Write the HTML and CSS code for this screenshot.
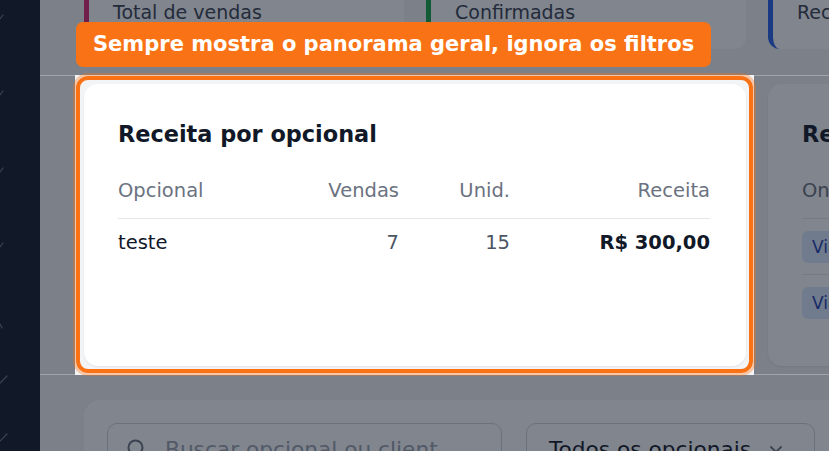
FILE: index.html
```html
<!DOCTYPE html>
<html lang="pt-BR">
<head>
<meta charset="utf-8">
<title>Receita por opcional</title>
<link rel="stylesheet" href="styles.css">
</head>
<body>
<div class="app">
  <aside class="sidebar">
    <svg class="side-marks" width="40" height="451" viewBox="0 0 40 451">
      <path d="M0 19 L3 15" />
      <path d="M0 95 L3 91" />
      <path d="M0 172 L3 168" />
      <path d="M0 247 L3 243" />
      <path d="M0 324 L2 328" />
      <path d="M0 383 L7 376" />
      <path d="M0 441 L7 434" />
    </svg>
  </aside>
  <main class="main">
    <div class="content">
      <section class="stats">
        <div class="stat stat-pink">
          <div class="stat-value">12</div>
          <div class="stat-label">Total de vendas</div>
        </div>
        <div class="stat stat-green">
          <div class="stat-value">7</div>
          <div class="stat-label">Confirmadas</div>
        </div>
        <div class="stat stat-blue">
          <div class="stat-value">R$ 300,00</div>
          <div class="stat-label">Receita total</div>
        </div>
      </section>

      <section class="cards">
        <div class="card card-wide">
          <h2 class="card-title">Receita por opcional</h2>
          <div class="table">
            <div class="th">Opcional</div>
            <div class="th num">Vendas</div>
            <div class="th num">Unid.</div>
            <div class="th num">Receita</div>
            <div class="td name">teste</div>
            <div class="td num muted">7</div>
            <div class="td num muted">15</div>
            <div class="td num strong">R$ 300,00</div>
          </div>
        </div>
        <div class="card">
          <h2 class="card-title">Receita por cliente</h2>
          <div class="list">
            <div class="list-head">Onde comprou</div>
            <div class="list-row"><span class="badge">Viagem</span></div>
            <div class="list-row"><span class="badge">Viagem</span></div>
          </div>
        </div>
      </section>

      <section class="filters">
        <div class="search">
          <svg class="search-icon" width="22" height="22" viewBox="0 0 22 22">
            <circle cx="9.5" cy="9.5" r="7" />
            <path d="M14.5 14.5 L20 20" />
          </svg>
          <span class="placeholder">Buscar opcional ou cliente</span>
        </div>
        <div class="select">
          <span class="select-text">Todos os opcionais</span>
          <svg class="chevron" width="14" height="14" viewBox="0 0 14 14">
            <path d="M2 5 L7 10 L12 5" />
          </svg>
        </div>
      </section>
    </div>
  </main>
</div>

<div class="tour">
  <div class="shade shade-top"></div>
  <div class="seam seam-top-left"></div>
  <div class="seam seam-top-right"></div>
  <div class="shade shade-left"></div>
  <div class="shade shade-right"></div>
  <div class="seam seam-bottom-left"></div>
  <div class="seam seam-bottom-right"></div>
  <div class="shade shade-bottom"></div>
  <div class="ring"></div>
  <div class="tip">Sempre mostra o panorama geral, ignora os filtros</div>
</div>
</body>
</html>
```

FILE: styles.css
```css
* { box-sizing: border-box; }

html, body {
  margin: 0;
  padding: 0;
  width: 829px;
  height: 451px;
  overflow: hidden;
  font-family: "DejaVu Sans", "Noto Sans", sans-serif;
  color: #111827;
}

.app {
  display: flex;
  width: 829px;
  height: 451px;
  overflow: hidden;
}

.sidebar {
  width: 40px;
  flex: 0 0 40px;
  background: #111827;
}

.side-marks path {
  stroke: #6b7280;
  stroke-width: 1.2;
  fill: none;
  stroke-linecap: round;
}

.main {
  flex: 1;
  background: #f3f4f6;
  overflow: hidden;
}

.content {
  width: 1120px;
  padding-left: 44px;
  margin-top: -50px;
  display: flex;
  flex-direction: column;
}

/* stat cards */
.stats {
  display: grid;
  grid-template-columns: 320px 320px 320px;
  column-gap: 22px;
  margin-bottom: 35px;
}

.stat {
  height: 99px;
  background: #ffffff;
  border-radius: 12px;
  border-left: 5px solid #db2777;
  padding: 14px 20px 25px 24px;
  display: flex;
  flex-direction: column;
  justify-content: flex-end;
}

.stat-green { border-left-color: #16a34a; }
.stat-blue { border-left-color: #2563eb; }

.stat-value {
  font-size: 24px;
  font-weight: bold;
  line-height: 30px;
  margin-bottom: 6px;
}

.stat-label {
  font-size: 19px;
  line-height: 24px;
  color: #374151;
}

/* cards row */
.cards {
  display: grid;
  grid-template-columns: 320px 320px 320px;
  column-gap: 22px;
  margin-bottom: 34px;
}

.card {
  height: 282px;
  background: #ffffff;
  border-radius: 14px;
  padding: 36px 34px 34px;
  box-shadow: 0 1px 2px rgba(15, 23, 42, 0.08);
}

.card-wide {
  grid-column: span 2;
}

.card-title {
  margin: 0 0 31px;
  font-size: 22.4px;
  line-height: 28px;
  font-weight: bold;
  color: #111827;
  white-space: nowrap;
}

.table {
  display: grid;
  grid-template-columns: 162px 119px 111px 200px;
  font-size: 19.5px;
  line-height: 24px;
}

.th {
  color: #6b7280;
  padding-bottom: 15px;
  border-bottom: 1px solid #e5e7eb;
}

.td {
  padding-top: 12px;
}

.num { text-align: right; }
.name { color: #111827; }
.muted { color: #4b5563; }
.strong { font-weight: bold; color: #111827; }

.list {
  font-size: 19.5px;
  line-height: 24px;
}

.list-head {
  color: #6b7280;
  padding-bottom: 15px;
  border-bottom: 1px solid #e5e7eb;
  white-space: nowrap;
}

.list-row {
  height: 56px;
  display: flex;
  align-items: center;
  border-bottom: 1px solid #e5e7eb;
}

.list-row:last-child { border-bottom: none; }

.badge {
  display: inline-block;
  height: 32px;
  line-height: 32px;
  padding: 0 10px;
  border-radius: 6px;
  background: #dbeafe;
  color: #1e40af;
  font-size: 17px;
}

/* filters */
.filters {
  background: #ffffff;
  border-radius: 16px;
  padding: 23px;
  display: flex;
  gap: 24px;
  height: 120px;
  width: 1004px;
}

.search, .select {
  height: 52px;
  border: 1px solid #d1d5db;
  border-radius: 10px;
  display: flex;
  align-items: center;
  font-size: 21.7px;
}

.search {
  width: 395px;
  padding-left: 18px;
  padding-right: 62px;
  gap: 17px;
}

.search-icon {
  flex: 0 0 22px;
}

.search-icon circle, .search-icon path {
  stroke: #6b7280;
  stroke-width: 2;
  fill: none;
  stroke-linecap: round;
}

.placeholder {
  color: #9ca3af;
  white-space: nowrap;
  overflow: hidden;
}

.select {
  width: 289px;
  padding-left: 22px;
  gap: 18px;
}

.select-text {
  color: #111827;
  white-space: nowrap;
}

.chevron path {
  stroke: #6b7280;
  stroke-width: 1.8;
  fill: none;
  stroke-linecap: round;
  stroke-linejoin: round;
}

/* tour overlay */
.tour {
  position: fixed;
  inset: 0;
  pointer-events: none;
}

.shade {
  position: absolute;
  background: rgba(17, 24, 39, 0.53);
}

.shade-top { left: 0; top: 0; width: 829px; height: 75px; }
.shade-left { left: 0; top: 76px; width: 75px; height: 298px; }
.shade-right { left: 754px; top: 76px; width: 75px; height: 298px; }
.shade-bottom { left: 0; top: 375px; width: 829px; height: 76px; }

.seam {
  position: absolute;
  height: 1px;
  background: rgba(17, 24, 39, 0.36);
}

.seam-top-left { left: 0; top: 75px; width: 75px; }
.seam-top-right { left: 754px; top: 75px; width: 75px; }
.seam-bottom-left { left: 0; top: 374px; width: 75px; }
.seam-bottom-right { left: 754px; top: 374px; width: 75px; }

.ring {
  position: absolute;
  left: 76px;
  top: 76px;
  width: 677px;
  height: 297px;
  border: 4px solid #f97316;
  border-radius: 12px;
  box-shadow: 0 0 0 3px rgba(249, 115, 22, 0.35);
}

.tip {
  position: absolute;
  left: 76px;
  top: 22px;
  height: 45px;
  padding: 0 17px;
  line-height: 45px;
  background: #f97316;
  color: #ffffff;
  border-radius: 7px;
  font-size: 21px;
  font-weight: bold;
  white-space: nowrap;
}
```
